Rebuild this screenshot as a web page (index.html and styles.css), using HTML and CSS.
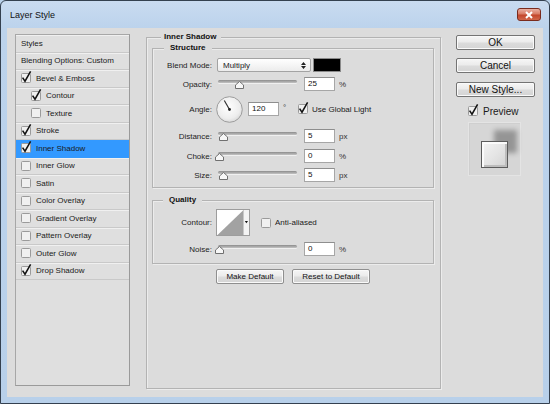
FILE: index.html
```html
<!DOCTYPE html>
<html>
<head>
<meta charset="utf-8">
<link rel="stylesheet" href="styles.css">
</head>
<body>
<div class="window">
  <div class="titlebar">
    <span class="title">Layer Style</span>
    <div class="close"><svg width="10" height="8" viewBox="0 0 10 8"><path d="M2 1 L8 7 M8 1 L2 7" stroke="#fff" stroke-width="2" fill="none"/></svg></div>
  </div>
  <div class="content">
    <div class="styles-list">
      <div class="row head">Styles</div>
      <div class="row head">Blending Options: Custom</div>
      <div class="row"><svg class="cb" viewBox="0 0 10 10"><rect x="0.5" y="0.5" width="9" height="9" rx="1"/><path class="tick" d="M1.6 4.6 L4 8.2 L9.6 -1.6"/></svg>Bevel &amp; Emboss</div>
      <div class="row sub"><svg class="cb" viewBox="0 0 10 10"><rect x="0.5" y="0.5" width="9" height="9" rx="1"/><path class="tick" d="M1.6 4.6 L4 8.2 L9.6 -1.6"/></svg>Contour</div>
      <div class="row sub"><svg class="cb" viewBox="0 0 10 10"><rect x="0.5" y="0.5" width="9" height="9" rx="1"/></svg>Texture</div>
      <div class="row"><svg class="cb" viewBox="0 0 10 10"><rect x="0.5" y="0.5" width="9" height="9" rx="1"/><path class="tick" d="M1.6 4.6 L4 8.2 L9.6 -1.6"/></svg>Stroke</div>
      <div class="row selected"><svg class="cb" viewBox="0 0 10 10"><rect x="0.5" y="0.5" width="9" height="9" rx="1"/><path class="tick" d="M1.6 4.6 L4 8.2 L9.6 -1.6"/></svg>Inner Shadow</div>
      <div class="row"><svg class="cb" viewBox="0 0 10 10"><rect x="0.5" y="0.5" width="9" height="9" rx="1"/></svg>Inner Glow</div>
      <div class="row"><svg class="cb" viewBox="0 0 10 10"><rect x="0.5" y="0.5" width="9" height="9" rx="1"/></svg>Satin</div>
      <div class="row"><svg class="cb" viewBox="0 0 10 10"><rect x="0.5" y="0.5" width="9" height="9" rx="1"/></svg>Color Overlay</div>
      <div class="row"><svg class="cb" viewBox="0 0 10 10"><rect x="0.5" y="0.5" width="9" height="9" rx="1"/></svg>Gradient Overlay</div>
      <div class="row"><svg class="cb" viewBox="0 0 10 10"><rect x="0.5" y="0.5" width="9" height="9" rx="1"/></svg>Pattern Overlay</div>
      <div class="row"><svg class="cb" viewBox="0 0 10 10"><rect x="0.5" y="0.5" width="9" height="9" rx="1"/></svg>Outer Glow</div>
      <div class="row"><svg class="cb" viewBox="0 0 10 10"><rect x="0.5" y="0.5" width="9" height="9" rx="1"/><path class="tick" d="M1.6 4.6 L4 8.2 L9.6 -1.6"/></svg>Drop Shadow</div>
    </div>

    <fieldset class="group main">
      <legend class="lg-main">Inner Shadow</legend>
      <fieldset class="group structure">
        <legend class="lg-structure">Structure</legend>
        <div class="frow">
          <span class="lbl">Blend Mode:</span>
          <div class="select"><span>Multiply</span><svg width="5" height="9" viewBox="0 0 5 9"><path d="M0 4 L2.5 1 L5 4 Z M0 5 L2.5 8 L5 5 Z" fill="#222"/></svg></div>
          <div class="swatch"></div>
        </div>
        <div class="frow r-opacity">
          <span class="lbl">Opacity:</span>
          <div class="slider"><div class="track"></div><svg class="thumb" style="left:20px" viewBox="0 0 9 8"><path d="M0.5 7.5 V4 L4.5 0.5 L8.5 4 V7.5 Z"/></svg></div>
          <div class="input">25</div><span class="unit">%</span>
        </div>
        <div class="frow r-angle">
          <span class="lbl">Angle:</span>
          <svg class="dial" width="27" height="27" viewBox="0 0 27 27">
            <defs><radialGradient id="dg" cx="0.45" cy="0.4" r="0.65"><stop offset="0" stop-color="#ffffff"/><stop offset="0.7" stop-color="#ededed"/><stop offset="1" stop-color="#d4d4d4"/></radialGradient></defs>
            <circle cx="13.5" cy="13.5" r="12.8" fill="url(#dg)" stroke="#9c9c9c"/>
            <path d="M13.5 13.5 L8.3 4.5" stroke="#333" stroke-width="1.2"/>
            <circle cx="13.5" cy="13.5" r="1.4" fill="#222"/>
          </svg>
          <div class="input angle-in">120</div><span class="unit deg">°</span>
          <svg class="cb" viewBox="0 0 10 10"><rect x="0.5" y="0.5" width="9" height="9" rx="1"/><path class="tick" d="M1.6 4.6 L4 8.2 L9.6 -1.6"/></svg>
          <span class="cbtext">Use Global Light</span>
        </div>
        <div class="frow r-distance">
          <span class="lbl">Distance:</span>
          <div class="slider"><div class="track"></div><svg class="thumb" style="left:4px" viewBox="0 0 9 8"><path d="M0.5 7.5 V4 L4.5 0.5 L8.5 4 V7.5 Z"/></svg></div>
          <div class="input">5</div><span class="unit">px</span>
        </div>
        <div class="frow r-choke">
          <span class="lbl">Choke:</span>
          <div class="slider"><div class="track"></div><svg class="thumb" style="left:0px" viewBox="0 0 9 8"><path d="M0.5 7.5 V4 L4.5 0.5 L8.5 4 V7.5 Z"/></svg></div>
          <div class="input">0</div><span class="unit">%</span>
        </div>
        <div class="frow r-size">
          <span class="lbl">Size:</span>
          <div class="slider"><div class="track"></div><svg class="thumb" style="left:4px" viewBox="0 0 9 8"><path d="M0.5 7.5 V4 L4.5 0.5 L8.5 4 V7.5 Z"/></svg></div>
          <div class="input">5</div><span class="unit">px</span>
        </div>
      </fieldset>

      <fieldset class="group quality">
        <legend class="lg-quality">Quality</legend>
        <div class="frow r-contour">
          <span class="lbl">Contour:</span>
          <svg class="contour" width="34" height="27" viewBox="0 0 34 27">
            <rect x="0.5" y="0.5" width="33" height="26" fill="#ffffff" stroke="#9d9d9d"/>
            <polygon points="1.5,26 27,1.5 27,26" fill="#a2a2a2"/>
            <rect x="27.5" y="1" width="5.5" height="25" fill="#f3f3f3"/>
            <line x1="27.5" y1="1" x2="27.5" y2="26" stroke="#c8c8c8"/>
            <polygon points="28.8,12 32,12 30.4,14.2" fill="#111"/>
          </svg>
          <svg class="cb aa" viewBox="0 0 10 10"><rect x="0.5" y="0.5" width="9" height="9" rx="1"/></svg>
          <span class="cbtext">Anti-aliased</span>
        </div>
        <div class="frow r-noise">
          <span class="lbl">Noise:</span>
          <div class="slider"><div class="track"></div><svg class="thumb" style="left:0px" viewBox="0 0 9 8"><path d="M0.5 7.5 V4 L4.5 0.5 L8.5 4 V7.5 Z"/></svg></div>
          <div class="input">0</div><span class="unit">%</span>
        </div>
      </fieldset>

      <div class="defaults">
        <div class="btn b-make">Make Default</div>
        <div class="btn b-reset">Reset to Default</div>
      </div>
    </fieldset>

    <div class="side">
      <div class="btn big">OK</div>
      <div class="btn big b-cancel">Cancel</div>
      <div class="btn big b-new">New Style...</div>
      <div class="preview-row">
        <svg class="cb" viewBox="0 0 10 10"><rect x="0.5" y="0.5" width="9" height="9" rx="1"/><path class="tick" d="M1.6 4.6 L4 8.2 L9.6 -1.6"/></svg>
        <span>Preview</span>
      </div>
      <div class="preview-box"><div class="preview-swatch"></div></div>
    </div>
  </div>
</div>
</body>
</html>
```

FILE: styles.css
```css
* { box-sizing: border-box; }
html, body { margin: 0; padding: 0; }
body {
  width: 550px;
  height: 404px;
  overflow: hidden;
  background: #b9d1ea;
  font-family: "Liberation Sans", Arial, sans-serif;
  font-size: 8px;
  color: #1c1c1c;
}
.window {
  width: 550px;
  height: 404px;
  border: 1px solid #34404f;
  border-radius: 6px 6px 0 0;
  background: linear-gradient(180deg, #c9dbf0 0px, #bcd3ec 27px, #b8d0ea 100%);
  padding: 0 6px 6px 6px;
  display: flex;
  flex-direction: column;
}
.titlebar {
  height: 27px;
  flex: none;
  display: flex;
  align-items: center;
  justify-content: space-between;
  padding: 0 2px 0 3px;
}
.title {
  font-size: 9px;
  color: #111;
}
.close {
  width: 24px;
  height: 13px;
  border: 1px solid #7a2b1d;
  border-radius: 3px;
  background: linear-gradient(180deg, #eab0a2 0%, #d87b64 45%, #c3462b 55%, #d0664a 100%);
  display: flex;
  align-items: center;
  justify-content: center;
}
.content {
  flex: 1;
  background: #dcdcdc;
  display: flex;
  align-items: flex-start;
  padding: 4px 8px 0 8px;
}

/* left list */
.styles-list {
  width: 115px;
  height: 352px;
  margin-top: 2px;
  flex: none;
  border: 1px solid #a7a7a7;
  border-right-color: #9a9a9a;
  border-bottom-color: #9a9a9a;
  background: #dfdfdf;
}
.row {
  height: 17.5px;
  display: flex;
  align-items: center;
  padding-left: 5px;
  border-bottom: 1px solid #c9c9c9;
  box-shadow: inset 0 1px 0 #f0f0f0;
  color: #1a1a1a;
  white-space: nowrap;
}
.row .cb { margin-right: 5px; }
.row.sub { padding-left: 15px; }
.row.selected {
  background: #3399ff;
  box-shadow: none;
  border-bottom-color: #3399ff;
}

.cb {
  width: 10px;
  height: 10px;
  flex: none;
  overflow: visible;
}
.cb rect { fill: #f0f0f0; stroke: #9a9a9a; }
.cb .tick { fill: none; stroke: #111; stroke-width: 1.5; }

/* group boxes */
.group {
  margin: 0;
  min-width: 0;
  border: 1px solid #b3b3b3;
  box-shadow: inset 1px 1px 0 #ececec, 1px 1px 0 #ececec;
}
.group legend {
  font-weight: bold;
  font-size: 8px;
  line-height: 10px;
  color: #111;
  background: #dcdcdc;
}
.main {
  width: 295px;
  height: 357px;
  margin-left: 16px;
  padding: 0 6px 0 5px;
  flex: none;
}
.lg-main { margin-left: 9px; padding: 0 5px 0 3px; }
.structure {
  margin-top: 1px;
  padding: 5px 0 5px 0;
}
.lg-structure { margin-left: 11px; padding: 0 6px 0 6px; }
.quality {
  margin-top: 7px;
  padding: 4px 0 7px 0;
}
.lg-quality { margin-left: 10px; padding: 0 6px 0 6px; }

.frow {
  display: flex;
  align-items: center;
  height: 14px;
  white-space: nowrap;
}
.lbl {
  width: 59px;
  flex: none;
  text-align: right;
  color: #1c1c1c;
}
.r-opacity { margin-top: 5px; }
.r-angle { margin-top: 5px; height: 26px; }
.r-distance { margin-top: 7px; }
.r-choke { margin-top: 6px; }
.r-size { margin-top: 5px; }
.r-contour { height: 27px; }
.r-noise { margin-top: 6px; }

.select {
  margin-left: 5px;
  width: 94px;
  height: 14px;
  border: 1px solid #a3a3a3;
  border-radius: 2px;
  background: linear-gradient(180deg, #ffffff, #ececec);
  display: flex;
  align-items: center;
  justify-content: space-between;
  padding: 0 4px 0 5px;
}
.swatch {
  margin-left: 2px;
  width: 28px;
  height: 14px;
  background: #000;
  border: 1px solid #8a8a8a;
}
.slider {
  position: relative;
  margin-left: 3px;
  width: 82px;
  height: 14px;
  flex: none;
}
.track {
  margin: 3px 0 0 3px;
  width: 79px;
  height: 3px;
  border-radius: 2px;
  background: linear-gradient(180deg, #8c8c8c, #c4c4c4);
  box-shadow: 0 1px 0 #f0f0f0;
}
.thumb {
  position: absolute;
  top: 4px;
  width: 9px;
  height: 8px;
}
.thumb path { fill: #f7f7f7; stroke: #707070; }
.input {
  margin-left: 7px;
  width: 31px;
  height: 14px;
  flex: none;
  background: #fff;
  border: 1px solid #a6a6a6;
  border-top-color: #8e8e8e;
  padding-left: 3px;
  line-height: 12px;
  color: #111;
}
.unit { margin-left: 4px; color: #333; }
.dial { margin-left: 4px; flex: none; }
.angle-in { margin-left: 5px; }
.deg { width: 15px; flex: none; align-self: flex-start; margin-top: 7px; }
.cbtext { margin-left: 4px; color: #1a1a1a; }
.contour { margin-left: 4px; flex: none; }
.aa { margin-left: 11px; }

.defaults {
  margin-top: 5px;
  display: flex;
  justify-content: center;
  gap: 8px;
}
.btn {
  height: 15px;
  border: 1px solid #8f8f8f;
  border-radius: 2px;
  background: linear-gradient(180deg, #f6f6f6 0%, #ebebeb 48%, #dcdcdc 52%, #d4d4d4 100%);
  box-shadow: inset 0 0 0 1px #fafafa;
  display: flex;
  align-items: center;
  justify-content: center;
  color: #111;
  white-space: nowrap;
}
.b-make { width: 68px; }
.b-reset { width: 78px; }

/* right column */
.side {
  width: 79px;
  margin-left: 15px;
  margin-top: 3px;
  flex: none;
  display: flex;
  flex-direction: column;
}
.btn.big {
  font-size: 10px;
  border-color: #747474;
}
.b-cancel { margin-top: 8px; }
.b-new { margin-top: 9px; }
.preview-row {
  margin-top: 8px;
  height: 12px;
  padding-left: 12px;
  display: flex;
  align-items: center;
  font-size: 10px;
  color: #1a1a1a;
}
.preview-row .cb { margin-right: 5px; }
.preview-box {
  margin-top: 5px;
  margin-left: 12px;
  width: 53px;
  height: 54px;
  background: #d6d6d6;
  border: 1px solid #e4e4e4;
  box-shadow: inset 1px 1px 0 #cfcfcf;
  padding: 18px 0 0 12px;
}
.preview-swatch {
  width: 27px;
  height: 27px;
  border: 1px solid #5c5c5c;
  background: linear-gradient(135deg, #f4f4f4 0%, #e2e2e2 60%, #d2d2d2 100%);
  box-shadow: inset 2px 2px 0 #fbfbfb, inset -2px -2px 0 #bdbdbd, 11px -13px 5px -2px rgba(0,0,0,0.3);
}
```
